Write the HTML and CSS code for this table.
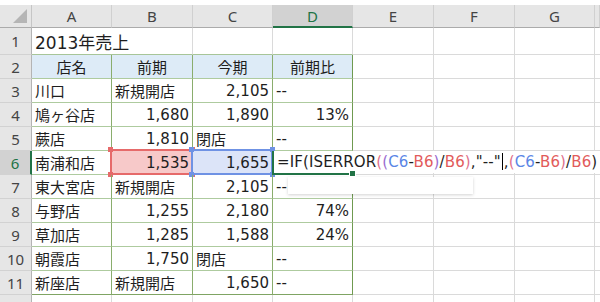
FILE: index.html
```html
<!DOCTYPE html>
<html lang="ja">
<head>
    <meta charset="UTF-8">
    <title>2013年売上</title>
    <link rel="stylesheet" href="styles.css">
</head>
<body>
    <div class="sheet">
        <div class="gap"></div>

        <div class="row head">
            <div class="corner"><span class="tri"></span></div>
            <div class="col-h">A</div>
            <div class="col-h">B</div>
            <div class="col-h">C</div>
            <div class="col-h active">D</div>
            <div class="col-h">E</div>
            <div class="col-h">F</div>
            <div class="col-h">G</div>
            <div class="col-h"></div>
        </div>

        <div class="row r1">
            <div class="row-h">1</div>
            <div class="cell title">2013年売上</div>
            <div class="cell top"></div>
            <div class="cell top"></div>
            <div class="cell top last"></div>
            <div class="cell"></div>
            <div class="cell"></div>
            <div class="cell"></div>
            <div class="cell"></div>
        </div>

        <div class="row">
            <div class="row-h">2</div>
            <div class="cell t th">店名</div>
            <div class="cell t th">前期</div>
            <div class="cell t th">今期</div>
            <div class="cell t th last">前期比</div>
            <div class="cell"></div>
            <div class="cell"></div>
            <div class="cell"></div>
            <div class="cell"></div>
        </div>

        <div class="row">
            <div class="row-h">3</div>
            <div class="cell t">川口</div>
            <div class="cell t">新規開店</div>
            <div class="cell t num">2,105</div>
            <div class="cell t last">--</div>
            <div class="cell"></div>
            <div class="cell"></div>
            <div class="cell"></div>
            <div class="cell"></div>
        </div>

        <div class="row">
            <div class="row-h">4</div>
            <div class="cell t">鳩ヶ谷店</div>
            <div class="cell t num">1,680</div>
            <div class="cell t num">1,890</div>
            <div class="cell t num last">13%</div>
            <div class="cell"></div>
            <div class="cell"></div>
            <div class="cell"></div>
            <div class="cell"></div>
        </div>

        <div class="row">
            <div class="row-h">5</div>
            <div class="cell t">蕨店</div>
            <div class="cell t num">1,810</div>
            <div class="cell t">閉店</div>
            <div class="cell t last">--</div>
            <div class="cell"></div>
            <div class="cell"></div>
            <div class="cell"></div>
            <div class="cell"></div>
        </div>

        <div class="row editing">
            <div class="row-h active">6</div>
            <div class="cell t">南浦和店</div>
            <div class="cell t num ref red">1,535
                <span class="frame"><i class="h tl"></i><i class="h tr"></i><i class="h bl"></i><i class="h br"></i></span>
            </div>
            <div class="cell t num ref blue">1,655
                <span class="frame"><i class="h tl"></i><i class="h tr"></i><i class="h bl"></i><i class="h br"></i></span>
            </div>
            <div class="cell t last current"><i class="fill"></i></div>
            <div class="cell"></div>
            <div class="cell"></div>
            <div class="cell"></div>
            <div class="cell"></div>

            <!-- in-cell editor, spills over E6:G6 -->
            <div class="editor">=IF(ISERROR<span class="pk">(</span><span class="pu">(</span><span class="bl">C6</span>-<span class="rd">B6</span><span class="pu">)</span>/<span class="rd">B6</span><span class="pk">)</span>,"--"<span class="caret"></span>,<span class="pk">(</span><span class="bl">C6</span>-<span class="rd">B6</span><span class="pk">)</span>/<span class="rd">B6</span>)</div>
            <div class="tip"></div>
        </div>

        <div class="row">
            <div class="row-h">7</div>
            <div class="cell t">東大宮店</div>
            <div class="cell t">新規開店</div>
            <div class="cell t num">2,105</div>
            <div class="cell t last">--</div>
            <div class="cell"></div>
            <div class="cell"></div>
            <div class="cell"></div>
            <div class="cell"></div>
        </div>

        <div class="row">
            <div class="row-h">8</div>
            <div class="cell t">与野店</div>
            <div class="cell t num">1,255</div>
            <div class="cell t num">2,180</div>
            <div class="cell t num last">74%</div>
            <div class="cell"></div>
            <div class="cell"></div>
            <div class="cell"></div>
            <div class="cell"></div>
        </div>

        <div class="row">
            <div class="row-h">9</div>
            <div class="cell t">草加店</div>
            <div class="cell t num">1,285</div>
            <div class="cell t num">1,588</div>
            <div class="cell t num last">24%</div>
            <div class="cell"></div>
            <div class="cell"></div>
            <div class="cell"></div>
            <div class="cell"></div>
        </div>

        <div class="row">
            <div class="row-h">10</div>
            <div class="cell t">朝霞店</div>
            <div class="cell t num">1,750</div>
            <div class="cell t">閉店</div>
            <div class="cell t last">--</div>
            <div class="cell"></div>
            <div class="cell"></div>
            <div class="cell"></div>
            <div class="cell"></div>
        </div>

        <div class="row">
            <div class="row-h">11</div>
            <div class="cell t bottom">新座店</div>
            <div class="cell t bottom">新規開店</div>
            <div class="cell t bottom num">1,650</div>
            <div class="cell t bottom last">--</div>
            <div class="cell"></div>
            <div class="cell"></div>
            <div class="cell"></div>
            <div class="cell"></div>
        </div>

        <div class="row">
            <div class="row-h">12</div>
            <div class="cell"></div>
            <div class="cell"></div>
            <div class="cell"></div>
            <div class="cell"></div>
            <div class="cell"></div>
            <div class="cell"></div>
            <div class="cell"></div>
            <div class="cell"></div>
        </div>
    </div>
</body>
</html>
```

FILE: styles.css
```css
body {
    margin: 0;
    background-color: #fff;
    font-family: "DejaVu Sans", "Noto Sans CJK JP", sans-serif;
    color: #1e1e1e;
    overflow: hidden;
}
.sheet {
    width: 600px;
}
.gap {
    height: 5px;
}
.row {
    display: grid;
    grid-template-columns: 32px 80px 81px 80px 80px 81px 81px 80px 1fr;
    height: 24px;
    position: relative;
}
.row.head {
    height: 23px;
}
.row.r1 {
    height: 27px;
}

/* headers */
.corner, .col-h, .row-h {
    background-color: #e6e6e6;
    color: #444;
    box-sizing: border-box;
    display: flex;
    align-items: center;
    justify-content: center;
    font-family: "Noto Sans", "DejaVu Sans", sans-serif;
    font-size: 15px;
}
.corner {
    position: relative;
    border-right: 1px solid #c6c6c6;
    border-bottom: 1px solid #ababab;
}
.corner .tri {
    position: absolute;
    right: 4px;
    bottom: 4px;
    width: 0;
    height: 0;
    border-left: 14px solid transparent;
    border-bottom: 14px solid #b5b5b5;
}
.col-h {
    border-right: 1px solid #d0d0d0;
    border-bottom: 1px solid #ababab;
}
.col-h.active {
    background-color: #d2d2d2;
    color: #217346;
    border-bottom: 2px solid #217346;
}
.row-h {
    border-right: 1px solid #b4b4b4;
    border-bottom: 1px solid #d2d2d2;
}
.row-h.active {
    background-color: #d2d2d2;
    color: #217346;
    border-right: 2px solid #217346;
}

/* cells */
.cell {
    box-sizing: border-box;
    border-right: 1px solid #dadada;
    border-bottom: 1px solid #dadada;
    padding: 0 3px;
    display: flex;
    align-items: center;
    white-space: nowrap;
    font-size: 15px;
    position: relative;
}
.cell.title {
    font-size: 17px;
    border-right: none;
    overflow: visible;
    z-index: 1;
}
.cell.top {
    border-bottom-color: #a7c598;
}
.r1 .title {
    border-bottom-color: #a7c598;
}
.cell.t {
    border-right-color: #8aad6d;
    border-bottom-color: #aecb9f;
}
.cell.t.last {
    border-right-color: #6f9a50;
}
.cell.top.last {
    border-right-color: #dadada;
}
.cell.bottom {
    border-bottom-color: #7fa463;
}
.cell.th {
    background-color: #ddebf7;
    justify-content: center;
}
.cell.num {
    justify-content: flex-end;
}

/* formula references */
.cell.red {
    background-color: #f7c9c9;
}
.cell.blue {
    background-color: #dce4f8;
}
.frame {
    position: absolute;
    left: -2px;
    right: -1px;
    top: -2px;
    bottom: -1px;
    border: 2px solid;
}
.red .frame {
    border-color: #e66a6a;
}
.blue .frame {
    border-color: #6f92e4;
}
.frame .h {
    position: absolute;
    width: 5px;
    height: 5px;
}
.red .h {
    background-color: #e66a6a;
}
.blue .h {
    background-color: #6f92e4;
}
.h.tl { left: -4px; top: -4px; }
.h.tr { right: -4px; top: -4px; }
.h.bl { left: -4px; bottom: -4px; }
.h.br { right: -4px; bottom: -4px; }

/* active cell */
.cell.current {
    border-left: 2px solid #217346;
    border-bottom: 2px solid #217346;
    margin-left: -1px;
}
.cell.current .fill {
    position: absolute;
    right: -4px;
    bottom: -4px;
    width: 5px;
    height: 5px;
    background-color: #217346;
    border: 1px solid #fff;
    z-index: 3;
}

.editor {
    position: absolute;
    left: 274px;
    top: 0;
    width: 326px;
    height: 22px;
    background-color: #fff;
    font-size: 15px;
    letter-spacing: 0.12px;
    line-height: 22px;
    padding-left: 3px;
    box-sizing: border-box;
    white-space: nowrap;
    z-index: 2;
}
.editor .pk { color: #e0708c; }
.editor .pu { color: #9a6bd0; }
.editor .bl { color: #5b86e6; }
.editor .rd { color: #e25b5b; }
.editor .caret {
    display: inline-block;
    width: 1px;
    height: 17px;
    margin: 0 1px -3px 1px;
    background-color: #000;
}
.tip {
    position: absolute;
    left: 288px;
    top: 26px;
    width: 185px;
    height: 17px;
    background-color: #fff;
    box-shadow: 0 1px 3px rgba(0,0,0,0.18);
    z-index: 2;
}
```
